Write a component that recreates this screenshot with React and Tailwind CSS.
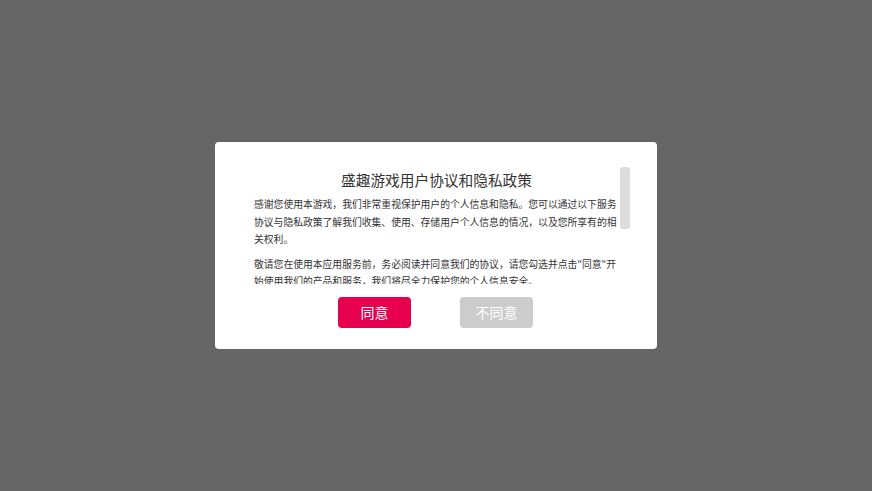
import React from 'react';

const paragraphs = [
  '感谢您使用本游戏，我们非常重视保护用户的个人信息和隐私。您可以通过以下服务协议与隐私政策了解我们收集、使用、存储用户个人信息的情况，以及您所享有的相关权利。',
  '敬请您在使用本应用服务前，务必阅读并同意我们的协议，请您勾选并点击"同意"开始使用我们的产品和服务，我们将尽全力保护您的个人信息安全。',
  '《用户协议》《隐私政策》',
];

const App = () => {
  return (
    <div
      className="w-[872px] h-[491px] bg-[#666666] flex items-center justify-center"
      style={{ fontFamily: '"Noto Sans CJK SC", "Noto Sans", sans-serif' }}
    >
      <div className="w-[442px] h-[207px] bg-white rounded-[4px] flex flex-col pt-[25px]">
        <div className="relative h-[117px] ml-[39px] mr-[27px] overflow-hidden">
          <div className="w-[366px]">
            <h2 className="text-[14.7px] leading-[26px] text-[#333] text-center mb-[3px] pr-[1px]">
              盛趣游戏用户协议和隐私政策
            </h2>
            {paragraphs.map((p, i) => (
              <p key={i} className="text-[9.8px] leading-[17.5px] text-[#333] mb-[7px] break-all">
                {p}
              </p>
            ))}
          </div>
          <div className="absolute right-0 top-0 w-[10px] h-[62px] rounded-[3px] bg-[#dcdcdc]" />
        </div>
        <div className="flex justify-center gap-[49px] mt-[13px] pr-[1px]">
          <button className="w-[73px] h-[31px] rounded-[4px] bg-[#e6004f] text-white text-[14px]">
            同意
          </button>
          <button className="w-[73px] h-[31px] rounded-[4px] bg-[#cccccc] text-white text-[14px]">
            不同意
          </button>
        </div>
      </div>
    </div>
  );
};

export default App;
